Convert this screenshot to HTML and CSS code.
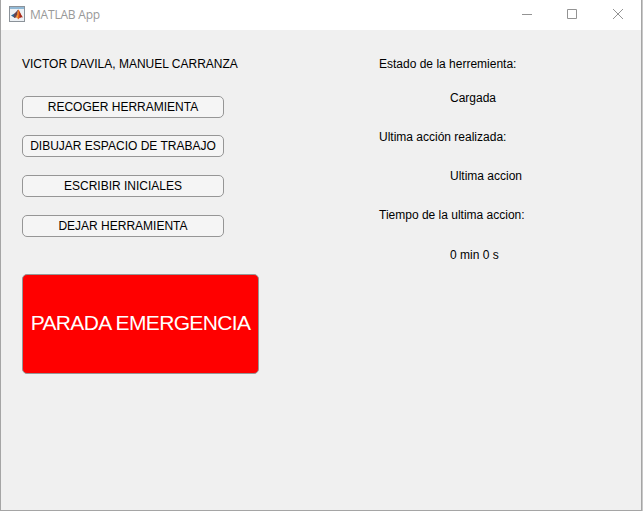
FILE: index.html
```html
<!DOCTYPE html>
<html lang="es">
<head>
<meta charset="utf-8">
<title>MATLAB App</title>
<link rel="stylesheet" href="styles.css">
</head>
<body>
<div class="window">
  <header class="titlebar">
    <svg class="app-icon" width="16" height="16" viewBox="0 0 16 16">
      <rect x=".5" y=".5" width="15" height="15" fill="#edf1f5" stroke="#8b9299"/>
      <path d="M1 1h14v2H1z" fill="#91b9d6"/>
      <path d="M2 9.5 5.5 7.5 8 9 6 12z" fill="#286b9c"/>
      <path d="M5.5 7.5C7.5 6 8 4 9.2 3.5L8 9 6 12 4.5 10.8z" fill="#68434d"/>
      <path d="M9.2 3.5c1.6 1 2.6 5.5 4.8 8-2-1.2-3 .1-5 2C8.5 11.5 7.5 11 6 12c2-2 2.5-5.5 3.2-8.5z" fill="#df5a1c"/>
      <path d="M9.2 4c.6 3 .3 5.5-.5 8.2L7.5 11C9 9 9 6 9.2 4z" fill="#f3a638"/>
      <path d="M10.3 5.2c1.3 2.5 2 4.8 3.7 6.3-1.6-.8-2.4-.1-3.3.6z" fill="#a22923"/>
    </svg>
    <h1 class="title">MATLAB App</h1>
    <div class="controls">
      <svg width="10" height="10" viewBox="0 0 10 10"><path d="M0 5.5h10"/></svg>
      <svg width="10" height="10" viewBox="0 0 10 10"><path d="M.5.5h9v9h-9z"/></svg>
      <svg class="close" width="10" height="10" viewBox="0 0 10 10"><path d="m0 0 10 10M10 0 0 10"/></svg>
    </div>
  </header>
  <main class="content">
    <section class="actions">
      <p class="authors">VICTOR DAVILA, MANUEL CARRANZA</p>
      <button class="button pick">RECOGER HERRAMIENTA</button>
      <button class="button draw">DIBUJAR ESPACIO DE TRABAJO</button>
      <button class="button write">ESCRIBIR INICIALES</button>
      <button class="button drop">DEJAR HERRAMIENTA</button>
      <button class="emergency">PARADA EMERGENCIA</button>
    </section>
    <dl class="status">
      <dt>Estado de la herremienta:</dt>
      <dd>Cargada</dd>
      <dt class="action">Ultima acción realizada:</dt>
      <dd>Ultima accion</dd>
      <dt class="elapsed">Tiempo de la ultima accion:</dt>
      <dd>0 min 0 s</dd>
    </dl>
  </main>
</div>
</body>
</html>
```
FILE: styles.css
```css
* { box-sizing: border-box; }
body {
  margin: 0;
  height: 511px;
  overflow: hidden;
  background: #c8c8c8;
  font: 12px/14px "Liberation Sans", Arial, sans-serif;
  color: #000;
}
.window {
  width: 642px;
  height: 511px;
  border: solid #a5a5a5;
  border-width: 0 1px 1px;
  background: #f0f0f0;
}
.titlebar {
  display: flex;
  align-items: center;
  height: 30px;
  padding: 0 18px 2px 8px;
  background: #fff;
}
.app-icon { flex: none; }
.title {
  margin: 2px 0 0 5px;
  font: 12px/16px "Open Sans", "Noto Sans", sans-serif;
  letter-spacing: -.2px;
  color: #999;
}
.controls {
  display: flex;
  gap: 35px;
  margin-left: auto;
}
.controls svg {
  fill: none;
  stroke: #939393;
  stroke-width: 1;
}
.controls .close { margin-left: 1px; }
.content {
  display: grid;
  grid-template-columns: 357px 1fr;
  padding: 27px 0 0 21px;
}
.actions {
  display: flex;
  flex-direction: column;
  align-items: flex-start;
}
.authors { margin: 0 0 25px; white-space: nowrap; }
.button, .emergency {
  padding: 0;
  border: 1px solid #969696;
  font-family: inherit;
  white-space: nowrap;
}
.button {
  width: 202px;
  height: 22px;
  margin-bottom: 18px;
  border-radius: 5px;
  background: #f5f5f5;
  font-size: 12px;
  line-height: 20px;
  color: #000;
}
.pick { margin-bottom: 17px; }
.drop { margin-bottom: 37px; }
.emergency {
  width: 237px;
  height: 100px;
  padding-bottom: 2px;
  border-radius: 5px;
  background: #f00;
  font-size: 21px;
  letter-spacing: -.65px;
  line-height: 24px;
  color: #fff;
}
.status { margin: 0; }
.status dt { margin-bottom: 20px; }
.status .action { margin-bottom: 25px; }
.status .elapsed { margin-bottom: 26px; }
.status dd { margin: 0 0 25px 71px; }
```
